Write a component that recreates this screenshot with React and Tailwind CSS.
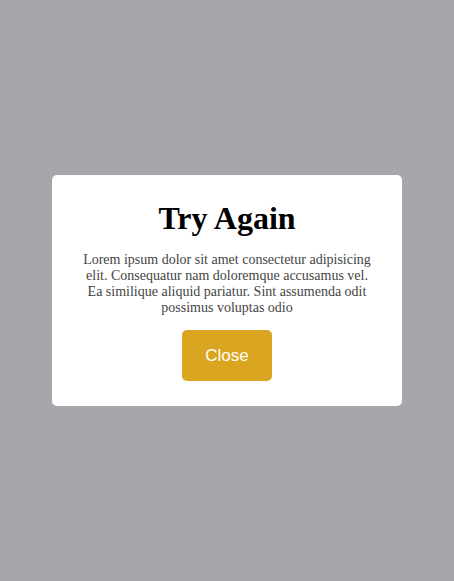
export default function App() {
  return (
    <div className="w-[454px] h-[581px] bg-[#a7a6ac] flex items-center justify-center">
      <div className="w-[350px] bg-white rounded-[5px] flex flex-col items-center p-[25px]">
        <h1 className="text-[32px] leading-[37px] font-bold text-black font-['Liberation_Serif',serif]">
          Try Again
        </h1>
        <p className="mt-[15px] text-[14px] leading-[16px] text-[#444] text-center w-[300px] font-['Liberation_Serif',serif]">
          Lorem ipsum dolor sit amet consectetur adipisicing elit. Consequatur nam doloremque accusamus vel. Ea similique aliquid pariatur. Sint assumenda odit possimus voluptas odio
        </p>
        <button className="mt-[14px] w-[90px] h-[51px] bg-[#daa520] rounded-[5px] text-white text-[17px] font-['Liberation_Sans',sans-serif]">
          Close
        </button>
      </div>
    </div>
  );
}
